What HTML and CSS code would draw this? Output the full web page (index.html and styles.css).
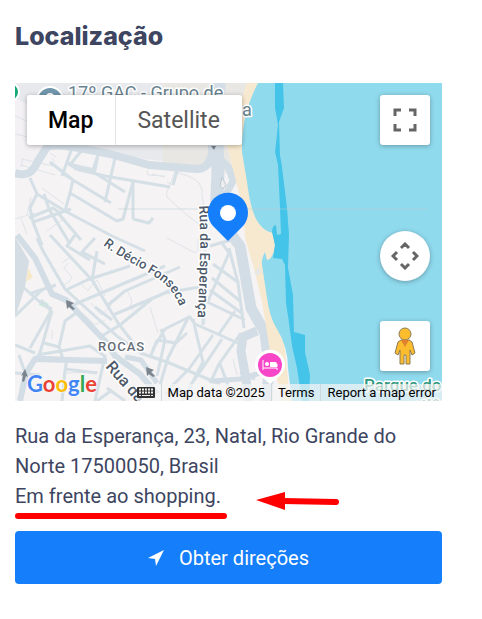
FILE: index.html
```html
<!DOCTYPE html>
<html lang="pt-BR">
<head>
    <meta charset="UTF-8">
    <meta name="viewport" content="width=device-width, initial-scale=1.0">
    <title>Localização</title>
    <link rel="stylesheet" href="styles.css">
</head>
<body>
    <section class="location">
        <h2>Localização</h2>

        <div class="map">
            <svg class="map-canvas" viewBox="0 0 427 318" preserveAspectRatio="xMidYMid slice">
                <!-- land -->
                <rect width="427" height="318" fill="#f5f3f4"/>
                <path d="M0 0H148V78L110 74 80 68 45 61H32L26 72 0 62Z" fill="#e7e9ed"/>
                <path d="M0 15L30 30V62L24 78 0 86Z" fill="#f3f1f3"/>
                <path d="M148 0H232L212 62 222 102 205 84 148 80Z" fill="#e9e7e3"/>
                <path d="M0 154L14 178 10 204 0 235Z" fill="#d5dde4"/>
                <path d="M13 185L18 194 11 199Z" fill="#f7e8c9"/>
                <path d="M26 217L34 221 31 225 24 222Z" fill="#c3eed5"/>

                <!-- thin streets -->
                <g class="thin">
                    <path d="M0 33L12 38M0 51L13 54M7 76L38 83M6 82L40 92M8 75L6 84M35 70L41 74M37 75L40 79M27 105L49 121M12 132L16 114M0 136L20 130M6 135L12 151M32 148L50 135"/>
                    <path d="M132 87L133 92 150 93M152 99L158 102M137 91L150 94M160 88C155 105 150 108 152 114L173 133 188 144M163 90C180 94 188 100 187 112L190 130M152 155L180 170 183 167V155"/>
                    <path d="M53 180L49 185 57 194 54 199 47 203M47 180L57 173M64 199L73 208 76 203 82 197 90 213M76 220L86 232 94 225 97 220M67 230L80 242 90 237M112 207L117 218 115 224 123 232M37 247V256M50 290L83 289M135 224L143 250M190 240V153M218 276L222 292"/>
                </g>

                <!-- streets -->
                <g class="street">
                    <path d="M47 93L57 65M54 83L67 67M78 87L83 72M90 119L100 75M83 72L80 87 61 83M52 80L75 87 110 109M61 86L90 93 155 104M55 81L61 86M47 90L58 97 55 110 102 138 108 136 118 99M58 97L96 120M55 110L50 128 97 153 130 168M35 79L58 97"/>
                    <path d="M15 95L22 111 50 128M22 111L15 125 18 139 27 162M14 135L38 125 45 130M29 111L34 126 55 161M18 139L56 126M43 130L66 157M118 99L118 136M118 136L134 140 138 135M158 102L162 88"/>
                    <path d="M22 155L28 168 50 206 103 254 125 269M60 152L52 163 75 177M80 155L67 169 90 181M35 152L77 197 103 240 123 266M51 207L72 197 115 183M77 197L82 168M58 222L150 183M93 222L110 208 165 184M98 232L150 210 190 203M85 254L105 242 138 215 160 205M97 237L80 224"/>
                    <path d="M8 204L26 220 37 226M14 211L41 202M0 233L27 207M26 217L36 228 15 265M37 228L24 273M29 260L44 264 50 238 61 230M22 272L75 263 91 274M44 264L48 276M0 262L20 270M0 290L25 292M4 272L10 290 6 318M20 274L92 278M52 275L50 288 47 318M50 286L82 290M90 273L80 318"/>
                    <path d="M138 266L150 246 172 235M142 257L161 260 172 250M142 257L135 275M146 246L150 257 142 293M125 270L152 279 205 301M174 233L153 275 145 302M178 236L188 279 168 318M198 252L174 286 155 305M207 256L187 286 175 303M226 250L204 281 195 300M205 281L213 302M174 233L180 241 225 261M188 217L230 237M188 224V242M193 218L214 170 207 160M198 181L224 200M197 195L225 218M195 207L228 231M214 165L223 200 229 245M220 228L204 251M195 163L216 157M150 311L165 305M225 290L240 296M92 305L110 318M82 318L97 307"/>
                </g>

                <!-- avenues -->
                <g class="avenue">
                    <path d="M0 90C14 94 18 88 23 78L32 64C42 60 66 65 95 71L134 82 182 86C190 86 195 81 197 70V60"/>
                    <path d="M204 0L202 60 203 90 201 135 218 155" stroke-width="13"/>
                    <path d="M202 73L214 85 218 98 210 113" stroke-width="7"/>
                    <path d="M215 150L225 163 236 225 250 250 254 282 252 318" stroke-width="11"/>
                    <path d="M242 248L228 254 226 268 231 296 234 318" stroke-width="9"/>
                    <path d="M2 152L20 175 37 211 51 217 92 260 100 273 125 291 142 311" stroke-width="6"/>
                    <path d="M5 318L11 290 20 276 92 278" stroke-width="6"/>
                    <path d="M110 274L126 277 142 300" stroke-width="5"/>
                    <path d="M197 298L225 296 245 290" stroke-width="5"/>
                </g>
                <path d="M207 94L211 102 208 106 205 103Z" fill="#eeedef" stroke="#bdcad3"/>

                <!-- one way arrows -->
                <g fill="#7b848c">
                    <path d="M51 217L59 220 56 222 60 226 58 227 54 224 52 226Z"/>
                    <path d="M131 284L139 287 136 289 140 293 138 294 134 291 132 293Z"/>
                    <path d="M10 286L13 294 11 293 9 299 7 298 8 292 6 293Z"/>
                    <path d="M196 63H201L199 67Z"/>
                </g>

                <!-- beach and sea -->
                <path d="M232 0H260V165L275 318H268L256 275 252 249 247 219 240 189 230 155 228 125 222 102 212 62Z" fill="#f7e9cf"/>
                <path d="M239 189L244 184 247 189 242 193Z" fill="#e9e7e3"/>
                <path d="M427 0H243Q226 32 227 69L232 99C236 130 242 146 258 150L260 163Q258 176 252 177L250 169Q246 176 247 182L252 215Q255 236 262 246 273 264 273 285L277 318H427Z" fill="#90daee"/>
                <path d="M260 0H268L269 25 264 39 265 72 267 84 268 92 272 125 274 152 273 185 278 212 279 249 290 252 290 269 295 292 294 318H287L282 285 277 263 274 240 271 220 270 182 267 176 258 175 260 162 257 149Q257 143 261 142L262 152 266 151 265 125 263 82 260 69 263 42 260 25Z" fill="#45c4ea"/>
                <path d="M103 126H412" stroke="#b7cbd1" stroke-opacity=".5"/>

                <!-- places behind the controls -->
                <circle cx="-5" cy="9" r="9" fill="#16a978" stroke="#fff" stroke-width="2"/>
                <circle cx="35" cy="17" r="13" fill="#7196ac" stroke="#fff" stroke-width="2"/>
                <circle cx="35" cy="14" r="4" fill="#fff"/>

                <defs>
                    <path id="decio" d="M88 162C108 178 139 189 154 205Q163 216 167 230"/>
                    <path id="esperanca" d="M184 123Q187 170 182 240"/>
                    <path id="rua" d="M90 284L140 340"/>
                </defs>
                <g class="label">
                    <text class="place" x="53" y="16">17º GAC - Grupo de</text>
                    <text class="place" x="227" y="33">a</text>
                    <text font-size="13"><textPath href="#decio">R. Décio Fonseca</textPath></text>
                    <text font-size="14"><textPath href="#esperanca">Rua da Esperança</textPath></text>
                    <text font-size="16"><textPath href="#rua">Rua da</textPath></text>
                    <text class="district" x="83" y="268" font-size="13">ROCAS</text>
                    <text class="park" x="349" y="308">Parque do</text>
                    <text class="park" x="397" y="328">atlân</text>
                </g>

                <!-- hotel -->
                <path d="M255 301L248 295A15 15 0 1 1 262 295Z" fill="#fff"/>
                <circle cx="255" cy="282" r="12" fill="#f846c8"/>
                <path d="M248 277V287M248 285H262V287M262 284V281" fill="none" stroke="#fff" stroke-width="1"/>
                <circle cx="252" cy="281" r="2" fill="#fff"/>
                <path d="M255 279H260Q262 279 262 281V284H255Z" fill="#fff"/>

                <!-- selected address -->
                <path d="M213 158L198 143A20 20 0 1 1 228 143Z" fill="#147efb"/>
                <circle cx="213" cy="130" r="8" fill="#fff"/>
            </svg>

            <div class="map-types">
                <button class="active" type="button">Map</button>
                <button type="button">Satellite</button>
            </div>

            <button class="control fullscreen" type="button" aria-label="Fullscreen">
                <svg width="24" height="24" viewBox="0 0 24 24">
                    <path d="M2 8V2H8M16 2H22V8M22 16V22H16M8 22H2V16" fill="none" stroke="#666" stroke-width="3"/>
                </svg>
            </button>
            <button class="control pan" type="button" aria-label="Map camera controls">
                <svg width="28" height="28" viewBox="0 0 28 28">
                    <path d="M10 6L14 2 18 6M10 22L14 26 18 22M6 10L2 14 6 18M22 10L26 14 22 18" fill="none" stroke="#666" stroke-width="3"/>
                </svg>
            </button>
            <button class="control pegman" type="button" aria-label="Street View">
                <svg width="22" height="38" viewBox="0 0 22 38">
                    <path d="M7 13H15L18 15 21 26 18 28 16 23V37H12V28H10V37H6V23L4 28 1 26 4 15Z" fill="#fbbc2e" stroke="#8c7a57"/>
                    <circle cx="11" cy="7" r="6" fill="#fbbc2e" stroke="#8c7a57"/>
                    <path d="M7 13H15L11 20Z" fill="#e0812f"/>
                </svg>
            </button>

            <a class="google" href="#" aria-label="Google"><span class="blue">G</span><span class="red">o</span><span class="yellow">o</span><span class="blue">g</span><span class="green">l</span><span class="red">e</span></a>

            <div class="map-footer">
                <button type="button" aria-label="Keyboard shortcuts">
                    <svg width="18" height="11" viewBox="0 0 18 11">
                        <rect width="18" height="11" rx="1" fill="#333"/>
                        <path d="M2 2.500H16M2 5.500H16" stroke="#eee" stroke-width="2" stroke-dasharray="2 1"/>
                        <path d="M2 8.500H4M5 8.500H13M14 8.500H16" stroke="#eee" stroke-width="1"/>
                    </svg>
                </button>
                <span>Map data ©2025</span>
                <a href="#">Terms</a>
                <a href="#">Report a map error</a>
            </div>
        </div>

        <div class="address">
            <p>Rua da Esperança, 23, Natal, Rio Grande do Norte 17500050, Brasil</p>
            <p>Em frente ao shopping.</p>
            <svg class="marks" width="326" height="32" viewBox="0 0 326 32">
                <path d="M3 27H209" stroke="#f00" stroke-width="6" stroke-linecap="round"/>
                <path d="M268 12L321 13" stroke="#f00" stroke-width="6" stroke-linecap="round"/>
                <path d="M241 11L270 3V21Z" fill="#f00"/>
            </svg>
        </div>

        <button class="directions" type="button">
            <svg width="16" height="16" viewBox="0 0 16 16">
                <path d="M16 0L8 16 7 9 0 8Z" fill="#fff"/>
            </svg>
            Obter direções
        </button>
    </section>
</body>
</html>
```
FILE: styles.css
```css
* {
    box-sizing: border-box;
}
body {
    margin: 0;
    background: #fff;
    color: #3d4561;
    font-family: Roboto, Arial, sans-serif;
    font-size: 20px;
    line-height: 30px;
}
button {
    border: 0;
    padding: 0;
    font-family: inherit;
    cursor: pointer;
}
svg {
    display: block;
}
.location {
    padding: 20px 40px 20px 15px;
}
h2 {
    margin: 0 0 31px;
    font-family: Inter, Roboto, sans-serif;
    font-size: 25px;
    font-weight: 800;
    line-height: 32px;
}
.map {
    position: relative;
    height: 318px;
    overflow: hidden;
}
.map-canvas {
    width: 100%;
    height: 100%;
}
.thin, .street, .avenue {
    fill: none;
    stroke-linejoin: round;
}
.thin {
    stroke: #dfe4e8;
    stroke-width: 1px;
}
.street {
    stroke: #d5dfe6;
    stroke-width: 3px;
}
.avenue {
    stroke: #d3dde5;
    stroke-width: 8;
}
.label {
    fill: #4d5a6a;
    stroke: #fff;
    stroke-width: 3px;
    stroke-linejoin: round;
    paint-order: stroke;
    font-weight: 500;
}
.place {
    fill: #68828f;
    font-size: 18px;
    font-weight: 400;
}
.park {
    fill: #31977e;
    font-size: 17px;
}
.district {
    fill: #666d75;
    letter-spacing: 1px;
}
.map-types {
    position: absolute;
    top: 12px;
    left: 12px;
    display: flex;
    border-radius: 3px;
    box-shadow: 0 1px 5px rgba(0, 0, 0, 0.3);
}
.map-types button {
    height: 50px;
    padding: 0 22px 0 21px;
    background: #fff;
    color: #565656;
    font-size: 23px;
    border-radius: 0 3px 3px 0;
}
.map-types .active {
    color: #000;
    font-weight: 500;
    border-right: 1px solid #e6e6e6;
    border-radius: 3px 0 0 3px;
}
.control {
    position: absolute;
    right: 12px;
    display: grid;
    place-items: center;
    width: 50px;
    height: 50px;
    background: #fff;
    border-radius: 3px;
    box-shadow: 0 1px 5px rgba(0, 0, 0, 0.3);
}
.fullscreen {
    top: 12px;
}
.pan {
    bottom: 120px;
    border-radius: 50%;
}
.pegman {
    bottom: 30px;
}
.google {
    position: absolute;
    left: 12px;
    bottom: 2px;
    font-family: Lato, sans-serif;
    font-size: 22px;
    font-weight: 700;
    text-decoration: none;
    text-shadow: 0 0 2px #fff, 0 0 2px #fff;
}
.blue { color: #4285f4; }
.red { color: #ea4335; }
.yellow { color: #fbbc05; }
.green { color: #34a853; }
.map-footer {
    position: absolute;
    right: 0;
    bottom: 0;
    display: flex;
    align-items: center;
    height: 17px;
    background: rgba(245, 245, 245, 0.7);
    color: #000;
    font-size: 13px;
    line-height: 17px;
}
.map-footer > * {
    padding: 0 6px;
}
.map-footer > * + * {
    border-left: 1px solid #cfd8dc;
}
.map-footer button {
    padding-left: 0;
    background: none;
}
.map-footer a {
    color: #000;
    text-decoration: none;
}
.address {
    position: relative;
    margin: 20px 0;
}
.address p {
    margin: 0;
}
/* red underline and arrow drawn over the last line */
.marks {
    position: absolute;
    left: 0;
    bottom: -10px;
}
.directions {
    display: flex;
    justify-content: center;
    align-items: center;
    gap: 15px;
    width: 100%;
    height: 53px;
    background: #147efb;
    color: #fff;
    font-size: 20px;
    border-radius: 4px;
}
```
